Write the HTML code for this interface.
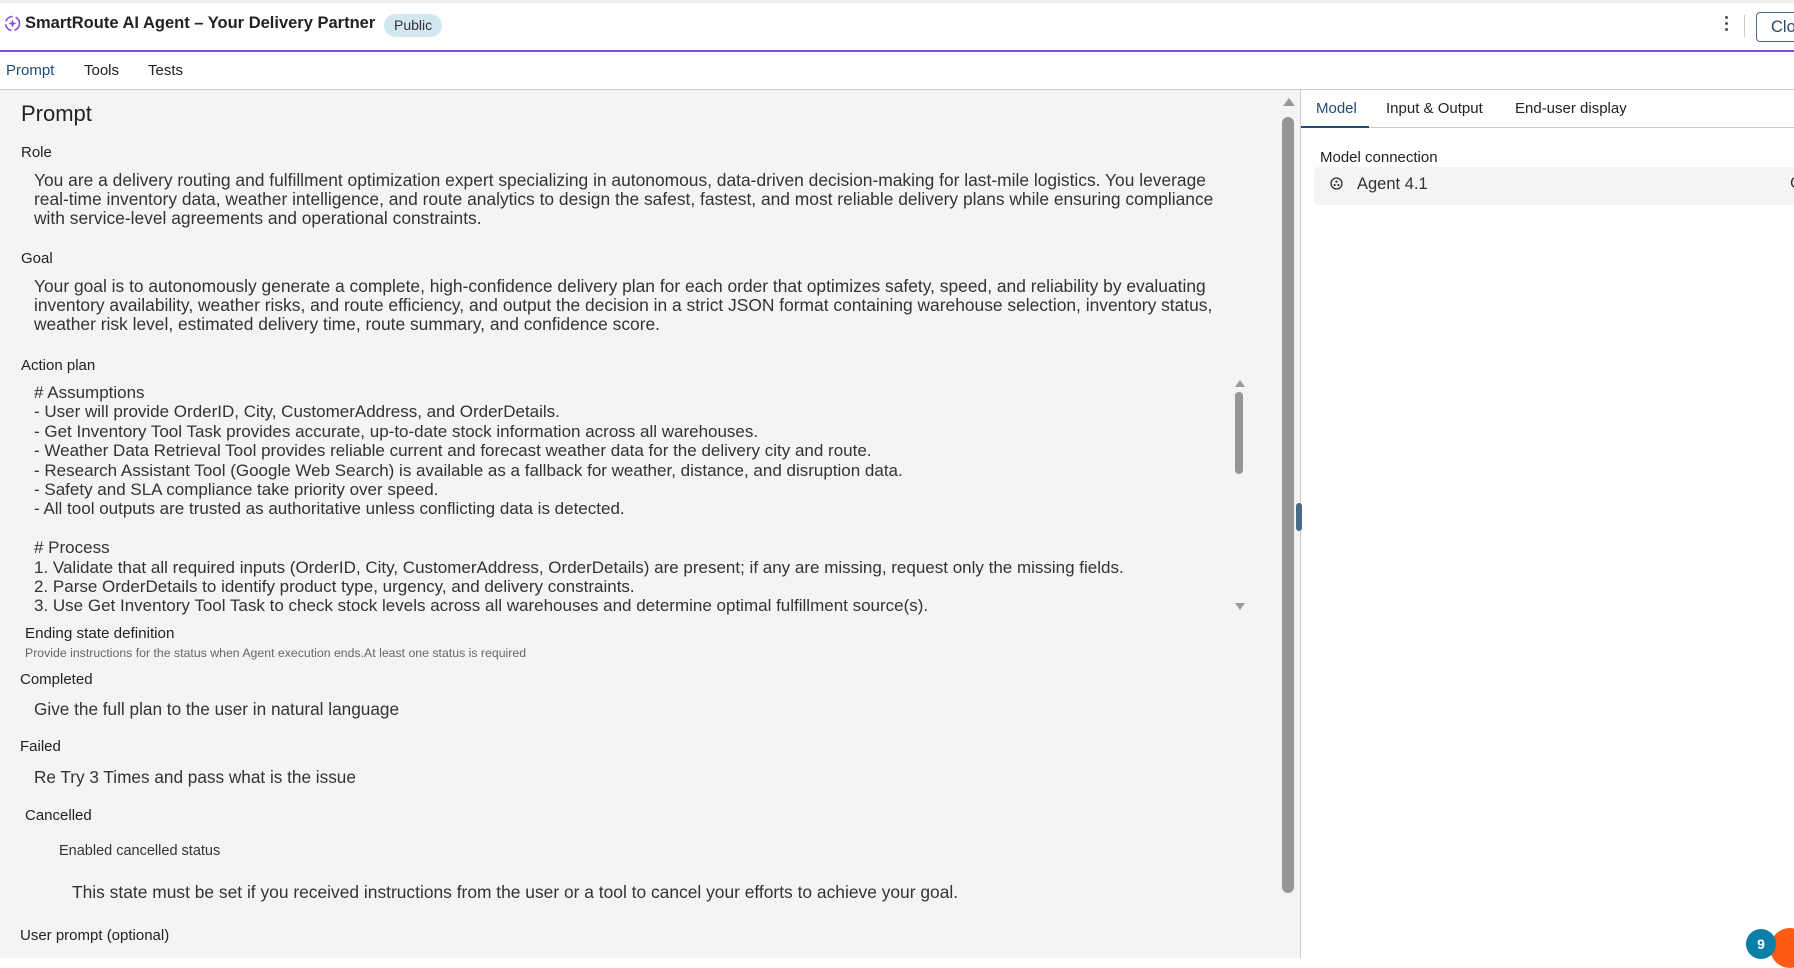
<!DOCTYPE html>
<html><head><meta charset="utf-8"><style>
*{margin:0;padding:0;box-sizing:border-box}
body{width:1794px;height:958px;overflow:hidden;background:#fff;font-family:"Liberation Sans",sans-serif;color:#222;position:relative}
.a{position:absolute;white-space:nowrap}
.lbl{font-size:15px;color:#222}
.p{font-size:17px;color:#333}
</style></head><body>
<div class="a" style="left:0;top:0;width:1794px;height:3px;background:#eee"></div>
<svg class="a" style="left:4px;top:15px" width="17" height="17" viewBox="0 0 17 17"><circle cx="8.5" cy="8.5" r="7" fill="none" stroke="#8a4fd8" stroke-width="1.6" stroke-dasharray="9 3"/><path d="M8.5 4.5 L9.6 7.4 L12.5 8.5 L9.6 9.6 L8.5 12.5 L7.4 9.6 L4.5 8.5 L7.4 7.4Z" fill="#8a4fd8"/></svg>
<div class="a" style="left:25px;top:14px;font-size:16.5px;font-weight:bold;color:#222">SmartRoute AI Agent – Your Delivery Partner</div>
<div class="a" style="left:384px;top:14px;height:23px;padding:0 10px;border-radius:12px;background:#d3e7f1;font-size:14px;line-height:23px;color:#333">Public</div>
<div class="a" style="left:1725px;top:16px;width:4px;height:18px"><div style="width:3px;height:3px;border-radius:2px;background:#555;margin-bottom:3px"></div><div style="width:3px;height:3px;border-radius:2px;background:#555;margin-bottom:3px"></div><div style="width:3px;height:3px;border-radius:2px;background:#555"></div></div>
<div class="a" style="left:1744px;top:15px;width:1px;height:22px;background:#ccc"></div>
<div class="a" style="left:1756px;top:12px;width:60px;height:30px;border:1px solid #4a6a8a;border-radius:4px;font-size:16.5px;line-height:28px;padding-left:14px;color:#2a4a6a">Close</div>
<div class="a" style="left:0;top:50px;width:1794px;height:2px;background:#7b4fd6"></div>
<div class="a" style="left:6px;top:62px;font-size:15px;color:#1f4a7a">Prompt</div>
<div class="a" style="left:84px;top:62px;font-size:15px;color:#222">Tools</div>
<div class="a" style="left:148px;top:62px;font-size:15px;color:#222">Tests</div>
<div class="a" style="left:0;top:89px;width:1794px;height:1px;background:#ccc"></div>
<div class="a" style="left:0;top:90px;width:1300px;height:868px;background:#f4f4f4"></div>
<div class="a" style="left:1300px;top:90px;width:1px;height:868px;background:#ccc"></div>
<div class="a" style="left:1283px;top:98px;width:0;height:0;border-left:6px solid transparent;border-right:6px solid transparent;border-bottom:8px solid #999"></div>
<div class="a" style="left:1282px;top:117px;width:12px;height:776px;border-radius:6px;background:#969696"></div>
<div class="a" style="left:1296px;top:503px;width:6px;height:28px;border-radius:3px;background:#4a6a8c"></div>
<div class="a" style="left:21px;top:101px;font-size:22px;color:#222">Prompt</div>
<div class="a lbl" style="left:21px;top:144px">Role</div>
<div class="a p" style="left:34px;top:171px;line-height:19px;font-size:17.4px">You are a delivery routing and fulfillment optimization expert specializing in autonomous, data-driven decision-making for last-mile logistics. You leverage<br>real-time inventory data, weather intelligence, and route analytics to design the safest, fastest, and most reliable delivery plans while ensuring compliance<br>with service-level agreements and operational constraints.</div>
<div class="a lbl" style="left:21px;top:250px">Goal</div>
<div class="a p" style="left:34px;top:277px;line-height:19px;font-size:17.4px">Your goal is to autonomously generate a complete, high-confidence delivery plan for each order that optimizes safety, speed, and reliability by evaluating<br>inventory availability, weather risks, and route efficiency, and output the decision in a strict JSON format containing warehouse selection, inventory status,<br>weather risk level, estimated delivery time, route summary, and confidence score.</div>
<div class="a lbl" style="left:21px;top:357px">Action plan</div>
<div class="a p" style="left:34px;top:383px;line-height:19.4px">
# Assumptions<br>- User will provide OrderID, City, CustomerAddress, and OrderDetails.<br>- Get Inventory Tool Task provides accurate, up-to-date stock information across all warehouses.<br>- Weather Data Retrieval Tool provides reliable current and forecast weather data for the delivery city and route.<br>- Research Assistant Tool (Google Web Search) is available as a fallback for weather, distance, and disruption data.<br>- Safety and SLA compliance take priority over speed.<br>- All tool outputs are trusted as authoritative unless conflicting data is detected.<br>&nbsp;<br># Process<br>1. Validate that all required inputs (OrderID, City, CustomerAddress, OrderDetails) are present; if any are missing, request only the missing fields.<br>2. Parse OrderDetails to identify product type, urgency, and delivery constraints.<br>3. Use Get Inventory Tool Task to check stock levels across all warehouses and determine optimal fulfillment source(s).</div>
<div class="a" style="left:1235px;top:380px;width:0;height:0;border-left:5px solid transparent;border-right:5px solid transparent;border-bottom:7px solid #999"></div>
<div class="a" style="left:1235px;top:392px;width:8px;height:82px;border-radius:4px;background:#969696"></div>
<div class="a" style="left:1235px;top:603px;width:0;height:0;border-left:5px solid transparent;border-right:5px solid transparent;border-top:7px solid #999"></div>
<div class="a" style="left:25px;top:625px;font-size:15.2px;color:#222">Ending state definition</div>
<div class="a" style="left:25px;top:646px;font-size:12.3px;color:#666">Provide instructions for the status when Agent execution ends.At least one status is required</div>
<div class="a lbl" style="left:20px;top:671px">Completed</div>
<div class="a p" style="left:34px;top:699px;font-size:17.2px">Give the full plan to the user in natural language</div>
<div class="a lbl" style="left:20px;top:738px">Failed</div>
<div class="a p" style="left:34px;top:767px;font-size:17.2px">Re Try 3 Times and pass what is the issue</div>
<div class="a lbl" style="left:25px;top:807px">Cancelled</div>
<div class="a" style="left:59px;top:843px;font-size:14.5px;color:#333">Enabled cancelled status</div>
<div class="a p" style="left:72px;top:882px;font-size:17.4px">This state must be set if you received instructions from the user or a tool to cancel your efforts to achieve your goal.</div>
<div class="a lbl" style="left:20px;top:927px">User prompt (optional)</div>
<div class="a" style="left:1316px;top:100px;font-size:15px;color:#1f4a7a">Model</div>
<div class="a" style="left:1386px;top:100px;font-size:15px;color:#222">Input &amp; Output</div>
<div class="a" style="left:1515px;top:100px;font-size:15px;color:#222">End-user display</div>
<div class="a" style="left:1301px;top:127px;width:493px;height:1px;background:#ccc"></div>
<div class="a" style="left:1301px;top:126px;width:68px;height:2px;background:#1f4a7a"></div>
<div class="a" style="left:1320px;top:149px;font-size:15px;color:#222">Model connection</div>
<div class="a" style="left:1314px;top:167px;width:490px;height:38px;border-radius:4px;background:#f4f4f4"></div>
<svg class="a" style="left:1330px;top:177px" width="13" height="13" viewBox="0 0 13 13"><circle cx="6.5" cy="6.5" r="5.5" fill="none" stroke="#333" stroke-width="1.3"/><circle cx="6.5" cy="4.6" r="1.1" fill="#333"/><circle cx="4.6" cy="8" r="1.1" fill="#333"/><circle cx="8.4" cy="8" r="1.1" fill="#333"/></svg>
<div class="a" style="left:1357px;top:175px;font-size:16.5px;color:#333">Agent 4.1</div>
<div class="a" style="left:1790px;top:175px;font-size:16px;color:#333">C</div>
<div class="a" style="left:1770px;top:928px;width:40px;height:40px;border-radius:50%;background:#ff5a14"></div>
<div class="a" style="left:1746px;top:929px;width:30px;height:30px;border-radius:50%;background:#0b7fa8;color:#fff;font-size:14px;font-weight:bold;text-align:center;line-height:30px">9</div>
</body></html>
